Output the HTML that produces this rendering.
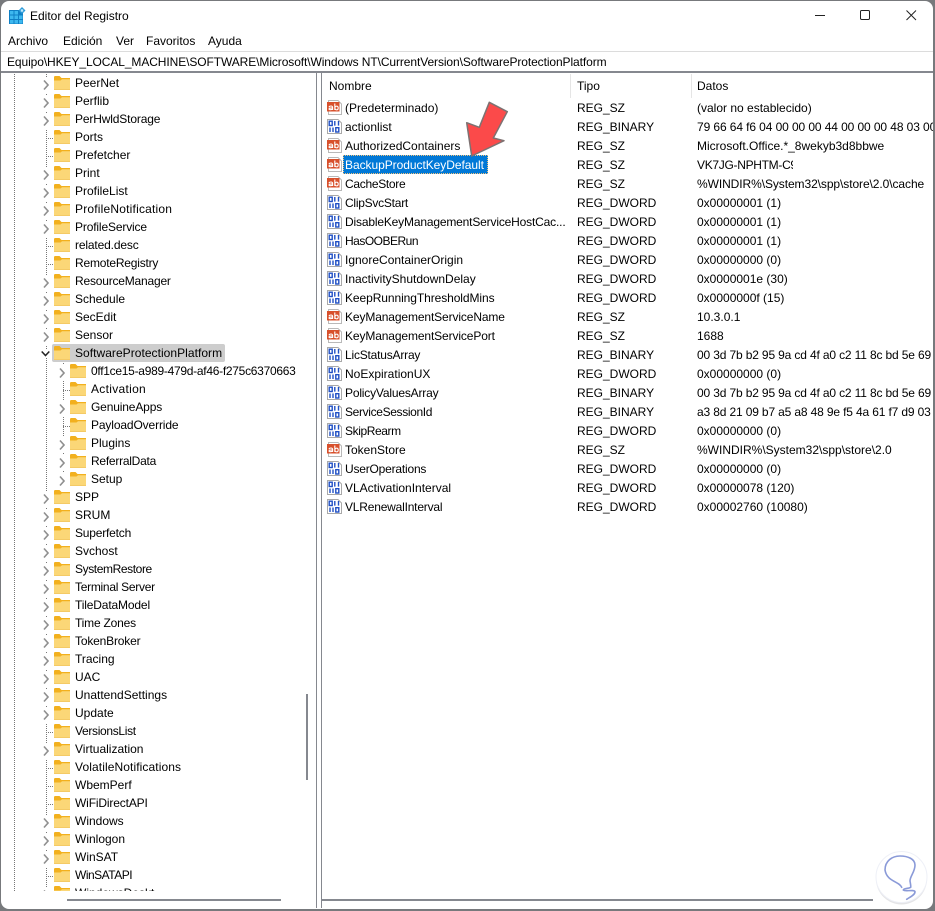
<!DOCTYPE html>
<html lang="es"><head><meta charset="utf-8"><title>Editor del Registro</title>
<style>
*{box-sizing:border-box}
html,body{margin:0;padding:0;width:935px;height:911px;overflow:hidden;background:#77797c}
body{position:relative;font:12px/18px "Liberation Sans",sans-serif;color:#000}
#w{position:absolute;left:1px;top:1px;width:932px;height:908px;background:#fff;border-radius:8px;overflow:hidden}
.a{position:absolute;white-space:nowrap}
#tree{position:absolute;left:0;top:74px;width:316px;height:817px;overflow:hidden}
#tree .r{position:relative;height:18px;white-space:nowrap}
#tree svg{position:absolute}
#tree .f{left:54px;top:2px;width:16px;height:14px}
#tree .ch{left:43px;top:3px;width:6px;height:16px;background:#fff}
#tree .t{position:absolute;left:75px;top:0}
#tree .s .f{left:70px}
#tree .s .ch{left:59px}
#tree .s .t{left:91px}
.dl{position:absolute;height:1px;width:7px;top:10px;left:46px;background-image:linear-gradient(90deg,#777 50%,transparent 50%);background-size:2px 1px}
.s .dl{left:63px}
.sel{position:absolute;left:52px;top:0;width:173px;height:18px;background:#cdcdcd;border-radius:2px}
.v{position:absolute;width:1px;background-image:linear-gradient(#777 50%,transparent 50%);background-size:1px 2px}
#list{position:absolute;left:322px;top:99px;width:611px;height:800px;overflow:hidden}
#list .r{position:relative;height:19px;white-space:nowrap}
#list svg{position:absolute;left:5px;top:1px;width:15px;height:15px}
#list span{position:absolute;top:0}
#list .n{left:23px}#list .y{left:255px}#list .d{left:375px}
</style></head><body>
<svg width="0" height="0" style="position:absolute"><defs>
<symbol id="fo" viewBox="0 0 16 14"><path d="M0 1.200Q0 0 1.200 0H5.500L7.500 2H16V5H0Z" fill="#f2b01e"/><path d="M0 4.500H6.500L8 3.200H16V14H0Z" fill="#fbd777"/><path d="M0 13.500H16V14H0Z" fill="#eebd55"/></symbol>
<symbol id="cv" viewBox="0 0 6 16"><path d="M1 3.500L5 8L1 12.500" fill="none" stroke="#8f8f8f" stroke-width="1.600"/></symbol>
<symbol id="ab" viewBox="0 0 15 15"><path d="M1.500 .5H11L14.500 4V14.500H1.500Z" fill="#fff" stroke="#b9b9b9"/><rect x="0" y="2" width="12.500" height="9.500" fill="#d8502c"/><path d="M2 7.200Q2.300 6 4 6Q5.600 6 5.600 7.500V10M5.600 8Q2 7.800 2 9.100Q2.300 10.300 5.600 9.200M7.800 3.500V10M7.800 8C8.300 5.500 11.200 5.500 11.200 8C11.200 10.500 8.300 10.500 7.800 8" fill="none" stroke="#fff" stroke-width="1.100"/></symbol>
<symbol id="bi" viewBox="0 0 15 15"><path d="M.5 .5H11L14.500 4V14.500H.5Z" fill="#fff" stroke="#a9a9a9"/><g fill="none" stroke="#1f4fc4" stroke-width="1.400"><rect x="2.200" y="2.200" width="3" height="4.300"/><path d="M7.800 2V6.600M11.500 2V6.600M3 8.500V13M6 8.500V13"/><rect x="8.800" y="8.700" width="3" height="4.300"/></g></symbol>
</defs></svg>
<div id="w"></div>
<svg class="a" style="left:9px;top:7px" width="17" height="17" viewBox="0 0 17 17"><rect x="0" y="3" width="14" height="14" fill="#0f7fc4"/><g fill="#3db8ef"><rect x="1" y="4" width="3.500" height="3.500"/><rect x="5.500" y="4" width="3.500" height="3.500"/><rect x="1" y="8.500" width="3.500" height="3.500"/><rect x="5.500" y="8.500" width="3.500" height="3.500"/><rect x="10" y="8.500" width="3.500" height="3.500"/><rect x="1" y="13" width="3.500" height="3.500"/><rect x="5.500" y="13" width="3.500" height="3.500"/><rect x="10" y="13" width="3.500" height="3.500"/></g><path d="M13 0L16.500 3.500L13 7L9.500 3.500Z" fill="#2a9ad8"/><rect x="11.800" y="2.300" width="2.400" height="2.400" fill="#bfe7fb"/></svg>
<div class="a" style="left:30px;top:7px">Editor del Registro</div>
<svg class="a" style="left:810px;top:5px" width="110" height="20" viewBox="0 0 110 20"><path d="M5 10.500H15" stroke="#222" stroke-width="1"/><rect x="50.500" y="5.500" width="9" height="9" rx="1.200" fill="none" stroke="#222"/><path d="M96.500 5.500L106 15M106 5.500L96.500 15" stroke="#222" fill="none"/></svg>
<div class="a" style="left:8px;top:32px">Archivo</div>
<div class="a" style="left:63px;top:32px">Edición</div>
<div class="a" style="left:116px;top:32px">Ver</div>
<div class="a" style="left:146px;top:32px">Favoritos</div>
<div class="a" style="left:208px;top:32px">Ayuda</div>
<div class="a" style="left:1px;top:51px;width:932px;height:1px;background:#dcdcdc"></div>
<div class="a" style="left:7px;top:53px;letter-spacing:-.092px">Equipo\HKEY_LOCAL_MACHINE\SOFTWARE\Microsoft\Windows NT\CurrentVersion\SoftwareProtectionPlatform</div>
<div class="a" style="left:1px;top:71px;width:932px;height:2px;background:#85888f"></div>
<div class="a" style="left:316px;top:72px;width:1px;height:836px;background:#85888f"></div>
<div class="a" style="left:321px;top:72px;width:1px;height:836px;background:#85888f"></div>

<div id="tree">
<div class="v" style="left:14px;top:0;height:817px"></div>
<div class="v" style="left:46px;top:0;height:817px"></div>
<div class="v" style="left:63px;top:287px;height:116px"></div>
<div class="r"><svg class="ch"><use href="#cv"/></svg><svg class="f"><use href="#fo"/></svg><span class="t">PeerNet</span></div>
<div class="r"><svg class="ch"><use href="#cv"/></svg><svg class="f"><use href="#fo"/></svg><span class="t">Perflib</span></div>
<div class="r"><svg class="ch"><use href="#cv"/></svg><svg class="f"><use href="#fo"/></svg><span class="t" style="letter-spacing:-.15px">PerHwldStorage</span></div>
<div class="r"><i class="dl"></i><svg class="f"><use href="#fo"/></svg><span class="t">Ports</span></div>
<div class="r"><i class="dl"></i><svg class="f"><use href="#fo"/></svg><span class="t">Prefetcher</span></div>
<div class="r"><svg class="ch"><use href="#cv"/></svg><svg class="f"><use href="#fo"/></svg><span class="t">Print</span></div>
<div class="r"><svg class="ch"><use href="#cv"/></svg><svg class="f"><use href="#fo"/></svg><span class="t">ProfileList</span></div>
<div class="r"><svg class="ch"><use href="#cv"/></svg><svg class="f"><use href="#fo"/></svg><span class="t" style="letter-spacing:.2px">ProfileNotification</span></div>
<div class="r"><svg class="ch"><use href="#cv"/></svg><svg class="f"><use href="#fo"/></svg><span class="t" style="letter-spacing:-.15px">ProfileService</span></div>
<div class="r"><i class="dl"></i><svg class="f"><use href="#fo"/></svg><span class="t" style="letter-spacing:-.15px">related.desc</span></div>
<div class="r"><i class="dl"></i><svg class="f"><use href="#fo"/></svg><span class="t" style="letter-spacing:-.2px">RemoteRegistry</span></div>
<div class="r"><svg class="ch"><use href="#cv"/></svg><svg class="f"><use href="#fo"/></svg><span class="t" style="letter-spacing:-.2px">ResourceManager</span></div>
<div class="r"><svg class="ch"><use href="#cv"/></svg><svg class="f"><use href="#fo"/></svg><span class="t">Schedule</span></div>
<div class="r"><svg class="ch"><use href="#cv"/></svg><svg class="f"><use href="#fo"/></svg><span class="t">SecEdit</span></div>
<div class="r"><svg class="ch"><use href="#cv"/></svg><svg class="f"><use href="#fo"/></svg><span class="t">Sensor</span></div>
<div class="r"><div class="sel"></div><svg style="left:41px;top:5px;width:9px;height:9px;background:#fff" viewBox="0 0 9 9"><path d="M.7 2.500L4.500 6.500L8.300 2.500" fill="none" stroke="#222" stroke-width="1.500"/></svg><svg class="f"><use href="#fo"/></svg><span class="t" style="letter-spacing:.04px">SoftwareProtectionPlatform</span></div>
<div class="r s"><svg class="ch"><use href="#cv"/></svg><svg class="f"><use href="#fo"/></svg><span class="t" style="letter-spacing:-.28px">0ff1ce15-a989-479d-af46-f275c6370663</span></div>
<div class="r s"><i class="dl"></i><svg class="f"><use href="#fo"/></svg><span class="t" style="letter-spacing:.3px">Activation</span></div>
<div class="r s"><svg class="ch"><use href="#cv"/></svg><svg class="f"><use href="#fo"/></svg><span class="t" style="letter-spacing:-.15px">GenuineApps</span></div>
<div class="r s"><i class="dl"></i><svg class="f"><use href="#fo"/></svg><span class="t" style="letter-spacing:-.13px">PayloadOverride</span></div>
<div class="r s"><svg class="ch"><use href="#cv"/></svg><svg class="f"><use href="#fo"/></svg><span class="t">Plugins</span></div>
<div class="r s"><svg class="ch"><use href="#cv"/></svg><svg class="f"><use href="#fo"/></svg><span class="t" style="letter-spacing:-.25px">ReferralData</span></div>
<div class="r s"><svg class="ch"><use href="#cv"/></svg><svg class="f"><use href="#fo"/></svg><span class="t">Setup</span></div>
<div class="r"><svg class="ch"><use href="#cv"/></svg><svg class="f"><use href="#fo"/></svg><span class="t">SPP</span></div>
<div class="r"><svg class="ch"><use href="#cv"/></svg><svg class="f"><use href="#fo"/></svg><span class="t">SRUM</span></div>
<div class="r"><svg class="ch"><use href="#cv"/></svg><svg class="f"><use href="#fo"/></svg><span class="t" style="letter-spacing:-.2px">Superfetch</span></div>
<div class="r"><svg class="ch"><use href="#cv"/></svg><svg class="f"><use href="#fo"/></svg><span class="t">Svchost</span></div>
<div class="r"><svg class="ch"><use href="#cv"/></svg><svg class="f"><use href="#fo"/></svg><span class="t" style="letter-spacing:-.4px">SystemRestore</span></div>
<div class="r"><svg class="ch"><use href="#cv"/></svg><svg class="f"><use href="#fo"/></svg><span class="t" style="letter-spacing:-.28px">Terminal Server</span></div>
<div class="r"><svg class="ch"><use href="#cv"/></svg><svg class="f"><use href="#fo"/></svg><span class="t" style="letter-spacing:-.15px">TileDataModel</span></div>
<div class="r"><svg class="ch"><use href="#cv"/></svg><svg class="f"><use href="#fo"/></svg><span class="t" style="letter-spacing:-.2px">Time Zones</span></div>
<div class="r"><svg class="ch"><use href="#cv"/></svg><svg class="f"><use href="#fo"/></svg><span class="t" style="letter-spacing:-.18px">TokenBroker</span></div>
<div class="r"><svg class="ch"><use href="#cv"/></svg><svg class="f"><use href="#fo"/></svg><span class="t">Tracing</span></div>
<div class="r"><svg class="ch"><use href="#cv"/></svg><svg class="f"><use href="#fo"/></svg><span class="t">UAC</span></div>
<div class="r"><svg class="ch"><use href="#cv"/></svg><svg class="f"><use href="#fo"/></svg><span class="t">UnattendSettings</span></div>
<div class="r"><svg class="ch"><use href="#cv"/></svg><svg class="f"><use href="#fo"/></svg><span class="t">Update</span></div>
<div class="r"><i class="dl"></i><svg class="f"><use href="#fo"/></svg><span class="t" style="letter-spacing:-.33px">VersionsList</span></div>
<div class="r"><svg class="ch"><use href="#cv"/></svg><svg class="f"><use href="#fo"/></svg><span class="t">Virtualization</span></div>
<div class="r"><i class="dl"></i><svg class="f"><use href="#fo"/></svg><span class="t" style="letter-spacing:.1px">VolatileNotifications</span></div>
<div class="r"><i class="dl"></i><svg class="f"><use href="#fo"/></svg><span class="t">WbemPerf</span></div>
<div class="r"><i class="dl"></i><svg class="f"><use href="#fo"/></svg><span class="t" style="letter-spacing:-.15px">WiFiDirectAPI</span></div>
<div class="r"><svg class="ch"><use href="#cv"/></svg><svg class="f"><use href="#fo"/></svg><span class="t">Windows</span></div>
<div class="r"><svg class="ch"><use href="#cv"/></svg><svg class="f"><use href="#fo"/></svg><span class="t">Winlogon</span></div>
<div class="r"><svg class="ch"><use href="#cv"/></svg><svg class="f"><use href="#fo"/></svg><span class="t">WinSAT</span></div>
<div class="r"><i class="dl"></i><svg class="f"><use href="#fo"/></svg><span class="t" style="letter-spacing:-.5px">WinSATAPI</span></div>
<div class="r"><svg class="ch"><use href="#cv"/></svg><svg class="f"><use href="#fo"/></svg><span class="t">WindowsDeskt</span></div>
</div>
<div class="a" style="left:306px;top:694px;width:2px;height:86px;background:#85888f"></div>
<div class="a" style="left:67px;top:899px;width:214px;height:2px;background:#85888f"></div>
<div class="a" style="left:322px;top:899px;width:551px;height:2px;background:#85888f"></div>

<div class="a" style="left:329px;top:77px">Nombre</div>
<div class="a" style="left:577px;top:77px">Tipo</div>
<div class="a" style="left:697px;top:77px">Datos</div>
<div class="a" style="left:570px;top:74px;width:1px;height:24px;background:#e5e5e5"></div>
<div class="a" style="left:691px;top:74px;width:1px;height:24px;background:#e5e5e5"></div>

<div id="list">
<div class="r"><svg><use href="#ab"/></svg><span class="n">(Predeterminado)</span><span class="y">REG_SZ</span><span class="d">(valor no establecido)</span></div>
<div class="r"><svg><use href="#bi"/></svg><span class="n">actionlist</span><span class="y">REG_BINARY</span><span class="d" style="letter-spacing:-.1px">79 66 64 f6 04 00 00 00 44 00 00 00 48 03 00 00</span></div>
<div class="r"><svg><use href="#ab"/></svg><span class="n">AuthorizedContainers</span><span class="y">REG_SZ</span><span class="d">Microsoft.Office.*_8wekyb3d8bbwe</span></div>
<div class="r"><svg><use href="#ab"/></svg><span class="n" style="left:21px;top:-1px;width:145px;height:19px;padding:1px 0 0 2px;background:#0078d7;color:#fff;outline:1px dotted #f4c27a;outline-offset:-1px;letter-spacing:-.05px">BackupProductKeyDefault</span><span class="y">REG_SZ</span><span class="d" style="width:96px;overflow:hidden;letter-spacing:-.3px">VK7JG-NPHTM-C97JM-9MPGT-3V66T</span></div>
<div class="r"><svg><use href="#ab"/></svg><span class="n" style="letter-spacing:-.3px">CacheStore</span><span class="y">REG_SZ</span><span class="d" style="letter-spacing:-.08px">%WINDIR%\System32\spp\store\2.0\cache</span></div>
<div class="r"><svg><use href="#bi"/></svg><span class="n" style="letter-spacing:-.25px">ClipSvcStart</span><span class="y">REG_DWORD</span><span class="d">0x00000001 (1)</span></div>
<div class="r"><svg><use href="#bi"/></svg><span class="n" style="letter-spacing:-.17px">DisableKeyManagementServiceHostCac...</span><span class="y">REG_DWORD</span><span class="d">0x00000001 (1)</span></div>
<div class="r"><svg><use href="#bi"/></svg><span class="n" style="letter-spacing:-.5px">HasOOBERun</span><span class="y">REG_DWORD</span><span class="d">0x00000001 (1)</span></div>
<div class="r"><svg><use href="#bi"/></svg><span class="n">IgnoreContainerOrigin</span><span class="y">REG_DWORD</span><span class="d">0x00000000 (0)</span></div>
<div class="r"><svg><use href="#bi"/></svg><span class="n">InactivityShutdownDelay</span><span class="y">REG_DWORD</span><span class="d">0x0000001e (30)</span></div>
<div class="r"><svg><use href="#bi"/></svg><span class="n" style="letter-spacing:-.08px">KeepRunningThresholdMins</span><span class="y">REG_DWORD</span><span class="d">0x0000000f (15)</span></div>
<div class="r"><svg><use href="#ab"/></svg><span class="n" style="letter-spacing:-.12px">KeyManagementServiceName</span><span class="y">REG_SZ</span><span class="d">10.3.0.1</span></div>
<div class="r"><svg><use href="#ab"/></svg><span class="n" style="letter-spacing:-.12px">KeyManagementServicePort</span><span class="y">REG_SZ</span><span class="d">1688</span></div>
<div class="r"><svg><use href="#bi"/></svg><span class="n" style="letter-spacing:-.2px">LicStatusArray</span><span class="y">REG_BINARY</span><span class="d" style="letter-spacing:-.15px">00 3d 7b b2 95 9a cd 4f a0 c2 11 8c bd 5e 69 9e</span></div>
<div class="r"><svg><use href="#bi"/></svg><span class="n">NoExpirationUX</span><span class="y">REG_DWORD</span><span class="d">0x00000000 (0)</span></div>
<div class="r"><svg><use href="#bi"/></svg><span class="n" style="letter-spacing:-.18px">PolicyValuesArray</span><span class="y">REG_BINARY</span><span class="d" style="letter-spacing:-.15px">00 3d 7b b2 95 9a cd 4f a0 c2 11 8c bd 5e 69 9e</span></div>
<div class="r"><svg><use href="#bi"/></svg><span class="n" style="letter-spacing:-.35px">ServiceSessionId</span><span class="y">REG_BINARY</span><span class="d" style="letter-spacing:-.15px">a3 8d 21 09 b7 a5 a8 48 9e f5 4a 61 f7 d9 03 6b</span></div>
<div class="r"><svg><use href="#bi"/></svg><span class="n" style="letter-spacing:-.4px">SkipRearm</span><span class="y">REG_DWORD</span><span class="d">0x00000000 (0)</span></div>
<div class="r"><svg><use href="#ab"/></svg><span class="n">TokenStore</span><span class="y">REG_SZ</span><span class="d">%WINDIR%\System32\spp\store\2.0</span></div>
<div class="r"><svg><use href="#bi"/></svg><span class="n" style="letter-spacing:-.2px">UserOperations</span><span class="y">REG_DWORD</span><span class="d">0x00000000 (0)</span></div>
<div class="r"><svg><use href="#bi"/></svg><span class="n">VLActivationInterval</span><span class="y">REG_DWORD</span><span class="d">0x00000078 (120)</span></div>
<div class="r"><svg><use href="#bi"/></svg><span class="n" style="letter-spacing:-.2px">VLRenewalInterval</span><span class="y">REG_DWORD</span><span class="d">0x00002760 (10080)</span></div>
</div>

<svg class="a" style="left:0;top:0" width="935" height="911" viewBox="0 0 935 911">
<path d="M489.300 102.300L507.300 111.700L493.300 138L504 140.700L471.700 156L466.700 122.700L479.300 127.300Z" fill="#fb4a4a" stroke="#7d7272" stroke-width="1.500" stroke-linejoin="round"/>
<circle cx="901.500" cy="879" r="25.500" fill="#d9d9dc" opacity=".7"/>
<circle cx="901.500" cy="877" r="25.500" fill="#fff" stroke="#eef0f7"/>
<path d="M901.700 887.300C899 881 887 882 885 870C885 861 892 856 900 856C908 856 915 859 915 865C915 872 910 876 910 881C910.500 884 911 886 910.700 887.300C908 889 904 888 903.300 890C905 892 914 889 915 891.700C915 895 910 897 906.700 899.300" fill="none" stroke="#8a9ad8" stroke-width="1.600" stroke-linecap="round"/>
</svg>
</body></html>
